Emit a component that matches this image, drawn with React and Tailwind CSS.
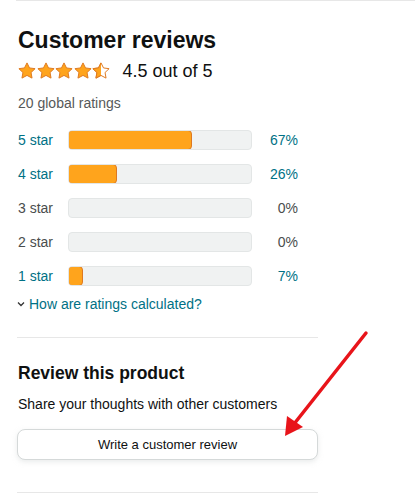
import React from 'react';

const font = { fontFamily: '"Liberation Sans", Arial, sans-serif' };

const STAR = 'M10 1l2.8 5.6 6.2.8-4.5 4.3 1.1 6.2L10 14.9l-5.6 3 1.1-6.2L1 7.4l6.2-.8z';

const Star = ({ half = false }) => (
  <svg width="18" height="18" viewBox="0 0 20 20" className="shrink-0">
    <defs>
      <clipPath id="half-star">
        <rect x="0" y="0" width="10" height="20" />
      </clipPath>
    </defs>
    {half ? (
      <>
        <path d={STAR} fill="#fff" stroke="#de7921" strokeWidth="1.1" strokeLinejoin="round" />
        <path d={STAR} fill="#ffa41c" stroke="#de7921" strokeWidth="1.1" strokeLinejoin="round" clipPath="url(#half-star)" />
      </>
    ) : (
      <path d={STAR} fill="#ffa41c" stroke="#de7921" strokeWidth="1.1" strokeLinejoin="round" />
    )}
  </svg>
);

const rows = [
  { label: '5 star', pct: 67, link: true },
  { label: '4 star', pct: 26, link: true },
  { label: '3 star', pct: 0, link: false },
  { label: '2 star', pct: 0, link: false },
  { label: '1 star', pct: 7, link: true },
];

const RatingRow = ({ label, pct, link }) => {
  const color = link ? 'text-[#007185]' : 'text-[#4a4d4d]';
  return (
    <div className="flex items-center h-[20px]">
      <span className={`w-[50px] text-[14px] ${color}`}>{label}</span>
      <div className="w-[184px] h-[20px] rounded-[4px] bg-[#f0f2f2] border border-[#e3e6e6] overflow-hidden flex">
        {pct > 0 && (
          <div
            className="h-full bg-[#ffa41c] border border-[#de7921] rounded-[4px] -m-px box-content"
            style={{ width: `${pct}%` }}
          />
        )}
      </div>
      <span className={`w-[46px] text-right text-[14px] ${color}`}>{pct}%</span>
    </div>
  );
};

export default function App() {
  return (
    <div className="relative w-[415px] h-[495px] bg-white overflow-hidden text-[#0f1111]" style={font}>
      <div className="ml-[16px] h-px bg-[#e7e7e7]" />

      <div className="pl-[18px] w-[318px]">
        <h2 className="mt-[25px] text-[23px] leading-[28px] font-bold">Customer reviews</h2>

        <div className="mt-[5px] flex items-center h-[24px]">
          <div className="flex gap-[0.6px]">
            <Star />
            <Star />
            <Star />
            <Star />
            <Star half />
          </div>
          <span className="ml-[12px] text-[18px]">4.5 out of 5</span>
        </div>

        <p className="mt-[10px] text-[14px] leading-[20px] text-[#565959]">20 global ratings</p>

        <div className="mt-[17px] flex flex-col gap-[14px]">
          {rows.map((r) => (
            <RatingRow key={r.label} {...r} />
          ))}
        </div>

        <div className="mt-[8px] flex items-center h-[20px] text-[#007185] text-[14px]">
          <svg width="8" height="6" viewBox="0 0 8 6" className="mr-[4px] -ml-px">
            <polyline points="1,1.5 4,4.5 7,1.5" fill="none" stroke="#333" strokeWidth="1.3" />
          </svg>
          <span>How are ratings calculated?</span>
        </div>
      </div>

      <div className="ml-[17px] w-[301px] mt-[23px] h-px bg-[#e7e7e7]" />

      <div className="pl-[18px] w-[318px]">
        <h3 className="mt-[24px] text-[17.5px] leading-[22px] font-bold">Review this product</h3>
        <p className="mt-[10px] text-[14px] leading-[20px]">Share your thoughts with other customers</p>
        <button className="-ml-px mt-[15px] w-[301px] h-[31px] rounded-[8px] border border-[#d5d9d9] bg-white shadow-[0_2px_5px_rgba(213,217,217,0.5)] text-[13px] text-[#0f1111]">
          Write a customer review
        </button>
      </div>

      <div className="ml-[17px] w-[301px] mt-[32px] h-px bg-[#e7e7e7]" />

      <svg className="absolute left-0 top-0 pointer-events-none" width="415" height="495">
        <line x1="366" y1="333" x2="294" y2="424" stroke="#e8141a" strokeWidth="3.5" strokeLinecap="round" />
        <polygon points="285,436 287,416 303,427" fill="#e8141a" />
      </svg>
    </div>
  );
}
